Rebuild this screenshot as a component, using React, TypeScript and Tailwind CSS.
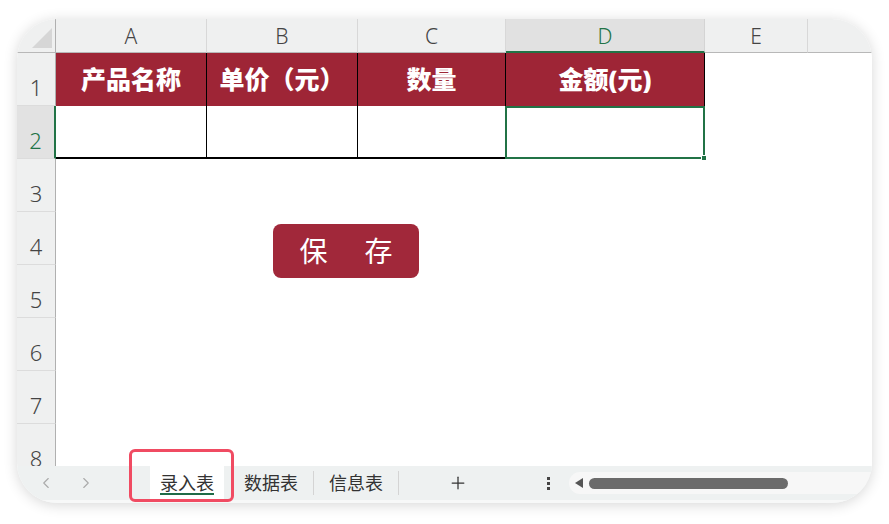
import { ChevronLeft, ChevronRight, Plus } from 'lucide-react'

const cols = [
  { key: 'A', w: 151 },
  { key: 'B', w: 151 },
  { key: 'C', w: 148 },
  { key: 'D', w: 199 },
  { key: 'E', w: 103 },
  { key: 'F', w: 100 },
]

const heads = ['产品名称', '单价（元）', '数量', '金额(元)']
const rows = [1, 2, 3, 4, 5, 6, 7, 8]

const font = { fontFamily: '"Noto Sans", "Noto Sans CJK SC", sans-serif' }

function Cell({ r, c }: { r: number; c: number }) {
  if (r === 1 && c < 4) {
    return (
      <div className="flex items-center justify-center bg-[#9e2536] border-r border-black text-white text-[25px] font-black">
        {heads[c]}
      </div>
    )
  }
  if (r === 2 && c < 3) {
    return <div className="bg-white border-r border-black border-b-2 border-b-black" />
  }
  if (r === 2 && c === 3) {
    return (
      <div className="relative bg-white border-2 border-[#217346] -ml-[1px]">
        <span className="absolute -right-[4px] -bottom-[4px] w-[6px] h-[6px] bg-[#217346] border border-white" />
      </div>
    )
  }
  return <div className="bg-white" />
}

export default function App() {
  return (
    <div className="w-[889px] h-[524px] bg-white pt-[19px] pl-[17px]" style={font}>
      <div className="relative flex flex-col w-[855px] h-[484px] rounded-[40px] overflow-hidden bg-white shadow-[0_2px_14px_rgba(0,0,0,0.16)]">
        {/* sheet */}
        <div className="relative flex-1 overflow-hidden">
          <div className="grid grid-cols-[39px_151px_151px_148px_199px_103px_1fr] grid-rows-[34px_repeat(8,53px)]">
            {/* corner */}
            <div className="relative bg-[#eff0f0] border-r border-[#b0b0b0] border-b border-b-[#b8b8b8]">
              <svg className="absolute right-[3px] bottom-[4px]" width="20" height="20" viewBox="0 0 20 20">
                <polygon points="20,0 20,20 0,20" fill="#d6d6d6" />
              </svg>
            </div>
            {cols.map((col) =>
              col.key === 'D' ? (
                <div
                  key={col.key}
                  className="flex items-center justify-center pt-[3px] bg-[#e1e1e1] border-r border-[#d4d4d4] border-b-2 border-b-[#217346] text-[21px] font-light text-[#217346]"
                >
                  {col.key}
                </div>
              ) : (
                <div
                  key={col.key}
                  className="flex items-center justify-center pt-[3px] bg-[#eff0f0] border-r border-[#d8d8d8] border-b border-b-[#b8b8b8] text-[21px] font-light text-[#444]"
                >
                  {col.key === 'F' ? '' : col.key}
                </div>
              ),
            )}
            {rows.map((r) => (
              <>
                <div
                  key={'h' + r}
                  className={
                    r === 2
                      ? 'flex items-end justify-center pb-[1px] bg-[#e2e2e2] border-r-2 border-[#217346] border-b border-b-[#dcdcdc] text-[22px] font-light text-[#217346]'
                      : 'flex items-end justify-center pb-[1px] bg-[#eff0f0] border-r border-[#b0b0b0] border-b border-b-[#dcdcdc] text-[22px] font-light text-[#444]'
                  }
                >
                  {r}
                </div>
                {cols.map((col, c) => (
                  <Cell key={r + col.key} r={r} c={c} />
                ))}
              </>
            ))}
          </div>

          {/* floating button */}
          <button className="absolute left-[256px] top-[205px] flex items-center justify-center gap-[37px] w-[146px] h-[54px] rounded-[8px] bg-[#a1283a] text-white text-[28px]">
            <span>保</span>
            <span>存</span>
          </button>
        </div>

        {/* tab bar */}
        <div className="flex items-center h-[37px] bg-[#eef1f1] border-b-[3px] border-[#f7f8f8] text-[18px] text-[#333]">
          <div className="flex items-center gap-[22px] pl-[20px] w-[133px] text-[#aaa]">
            <ChevronLeft size={18} strokeWidth={1.5} />
            <ChevronRight size={18} strokeWidth={1.5} />
          </div>
          <div className="relative flex items-center justify-center w-[74px] h-full bg-white">
            <span>录入表</span>
            <span className="absolute left-[10px] right-[10px] bottom-[5px] h-[2px] bg-[#1f6b47]" />
          </div>
          <div className="flex items-center pl-[20px] pr-[15px] h-[24px] border-r border-[#d4d4d4]">数据表</div>
          <div className="flex items-center px-[15px] h-[24px] border-r border-[#d4d4d4]">信息表</div>
          <div className="flex items-center justify-center w-[118px]">
            <Plus size={20} strokeWidth={1.5} />
          </div>
          <div className="flex flex-col gap-[2px] items-center w-[30px] ml-[16px]">
            <span className="w-[3px] h-[3px] bg-[#444]" />
            <span className="w-[3px] h-[3px] bg-[#444]" />
            <span className="w-[3px] h-[3px] bg-[#444]" />
          </div>
          <div className="flex items-center gap-[6px] flex-1 h-[22px] ml-[6px] pl-[6px] bg-[#f7f7f7] rounded-l-full">
            <svg width="8" height="10" viewBox="0 0 8 10">
              <polygon points="8,0 8,10 0,5" fill="#555" />
            </svg>
            <span className="w-[199px] h-[11px] rounded-full bg-[#6b6b6b]" />
          </div>
        </div>

        {/* annotation */}
        <div className="absolute left-[112px] top-[430px] w-[105px] h-[53px] rounded-[6px] border-[3px] border-[#f04b62]" />
      </div>
    </div>
  )
}
